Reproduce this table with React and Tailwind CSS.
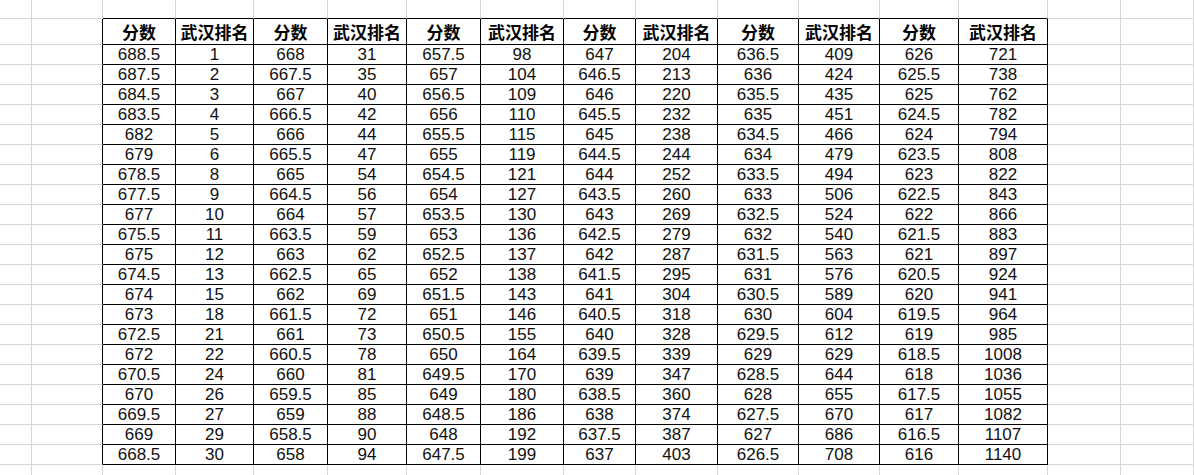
import React from "react";

const scoreCols = [
  [688.5, 687.5, 684.5, 683.5, 682, 679, 678.5, 677.5, 677, 675.5, 675, 674.5, 674, 673, 672.5, 672, 670.5, 670, 669.5, 669, 668.5],
  Array.from({ length: 21 }, (_, i) => 668 - i * 0.5),
  Array.from({ length: 21 }, (_, i) => 657.5 - i * 0.5),
  Array.from({ length: 21 }, (_, i) => 647 - i * 0.5),
  Array.from({ length: 21 }, (_, i) => 636.5 - i * 0.5),
  Array.from({ length: 21 }, (_, i) => 626 - i * 0.5),
];

const rankCols = [
  [1, 2, 3, 4, 5, 6, 8, 9, 10, 11, 12, 13, 15, 18, 21, 22, 24, 26, 27, 29, 30],
  [31, 35, 40, 42, 44, 47, 54, 56, 57, 59, 62, 65, 69, 72, 73, 78, 81, 85, 88, 90, 94],
  [98, 104, 109, 110, 115, 119, 121, 127, 130, 136, 137, 138, 143, 146, 155, 164, 170, 180, 186, 192, 199],
  [204, 213, 220, 232, 238, 244, 252, 260, 269, 279, 287, 295, 304, 318, 328, 339, 347, 360, 374, 387, 403],
  [409, 424, 435, 451, 466, 479, 494, 506, 524, 540, 563, 576, 589, 604, 612, 629, 644, 655, 670, 686, 708],
  [721, 738, 762, 782, 794, 808, 822, 843, 866, 883, 897, 924, 941, 964, 985, 1008, 1036, 1055, 1082, 1107, 1140],
];

const COLS = 16;
const ROWS = 24;
const T_COL0 = 2, T_COL1 = 13; // table columns
const T_ROW0 = 1, T_ROW1 = 22; // header + 21 data rows

function cellText(r, c) {
  if (r < T_ROW0 || r > T_ROW1 || c < T_COL0 || c > T_COL1) return null;
  const k = c - T_COL0;
  const pair = Math.floor(k / 2);
  const isRank = k % 2 === 1;
  if (r === T_ROW0) return isRank ? "武汉排名" : "分数";
  const v = isRank ? rankCols[pair][r - 2] : scoreCols[pair][r - 2];
  return String(v);
}

export default function App() {
  const cells = [];
  for (let r = 0; r < ROWS; r++) {
    for (let c = 0; c < COLS; c++) {
      const inRows = r >= T_ROW0 && r <= T_ROW1;
      const inCols = c >= T_COL0 && c <= T_COL1;
      const rightBlack = inRows && (inCols || c === T_COL0 - 1);
      const bottomBlack = inCols && (inRows || r === T_ROW0 - 1);
      const text = cellText(r, c);
      const header = r === T_ROW0 && inCols;
      cells.push(
        <div
          key={r + "-" + c}
          className={`flex items-center justify-center border-r border-b ${
            rightBlack ? "border-r-black" : "border-r-[#d6d6d6]"
          } ${bottomBlack ? "border-b-black" : "border-b-[#d6d6d6]"} ${
            header
              ? "font-['Noto_Sans_CJK_SC',sans-serif] font-bold text-[17px] leading-none"
              : "font-['Liberation_Sans',Arial,sans-serif] text-[17px] leading-none text-[#111]"
          }`}
        >
          {text}
        </div>
      );
    }
  }

  return (
    <div className="w-[1194px] h-[475px] overflow-hidden bg-white">
      <div className="grid grid-cols-[32px_71px_73px_78px_74px_79px_74px_83px_72px_82px_81px_81px_79px_89px_73px_73px] grid-rows-[19px_26px_repeat(21,20px)_20px]">
        {cells}
      </div>
    </div>
  );
}
